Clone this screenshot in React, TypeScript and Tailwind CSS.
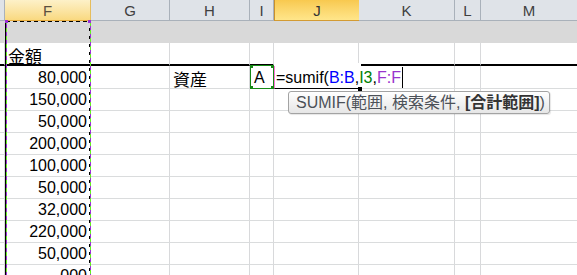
import React from "react";

const W = [5, 86, 79, 80, 24, 85, 96, 26, 97];
const H = ["", "F", "G", "H", "I", "J", "K", "L", "M"];
const nums = ["150,000", "50,000", "200,000", "100,000", "50,000", "32,000", "220,000", "50,000", "000"];

function HeaderRow() {
  return (
    <div className="flex h-[21px]">
      {W.map((w, i) => {
        let cls = "bg-[#dfe3e8] border-r border-b border-[#a9b1ba] text-[#404040]";
        if (i === 1) cls = "bg-gradient-to-b from-[#fdf1c8] to-[#f9d980] border-r border-r-[#e6bd5c] border-b border-b-[#e8ac3c] text-[#5a5040]";
        if (i === 5) cls = "bg-gradient-to-b from-[#f8c94f] to-[#ffe68a] border-l border-l-[#c9912c] border-b border-b-[#d39b33] text-[#333]";
        return (
          <div key={i} style={{ width: w }} className={`shrink-0 h-full flex items-center justify-center text-[15px] leading-none ${cls}`}>
            {H[i]}
          </div>
        );
      })}
    </div>
  );
}

function Row({ h, cells, bottom }: { h: string; cells: (React.ReactNode | null)[]; bottom: string }) {
  return (
    <div className={`flex ${h}`}>
      {W.map((w, i) => (
        <div
          key={i}
          style={{ width: w }}
          className={`shrink-0 h-full flex items-end border-r border-r-[#d8d9db] ${bottom} ${i === 0 ? "bg-white" : ""}`}
        >
          {cells[i] ?? null}
        </div>
      ))}
    </div>
  );
}

function Num({ v }: { v: string }) {
  return <div className="w-full text-right pr-[3px] pb-[2px] text-[16px] leading-[16px] text-black">{v}</div>;
}

export default function App() {
  return (
    <div className="relative w-[577px] h-[275px] overflow-hidden bg-white font-['Liberation_Sans','Noto_Sans_CJK_JP',sans-serif]">
      <HeaderRow />
      {/* row 2 gray */}
      <div className="flex h-[22px] bg-[#d9d9d9]" />
      {/* row 3 */}
      <Row
        h="h-[23px]"
        bottom="border-b-2 border-b-black"
        cells={[null, <div className="pl-[3px] text-[17px] leading-[17px] text-black font-['Noto_Sans_CJK_JP',sans-serif]">金額</div>]}
      />
      {/* row 4 */}
      <Row
        h="h-[23px]"
        bottom="border-b border-b-[#dadcdd]"
        cells={[
          null,
          <Num v="80,000" />,
          null,
          <div className="pl-[3px] pb-[1px] text-[17px] leading-[17px] text-black font-['Noto_Sans_CJK_JP',sans-serif]">資産</div>,
          <div className="pl-[4px] pb-[2px] text-[16px] leading-[16px] text-black">A</div>,
        ]}
      />
      {nums.map((n, k) => (
        <Row key={k} h="h-[22px]" bottom="border-b border-b-[#dadcdd]" cells={[null, <Num v={n} />]} />
      ))}

      {/* marquee / range border on column F */}
      <svg className="absolute left-0 top-[20px]" width="96" height="260">
        <line x1="5.5" y1="0" x2="5.5" y2="260" stroke="#000" strokeWidth="1" />
        <line x1="6.5" y1="0" x2="6.5" y2="260" stroke="#9a2fd6" strokeWidth="1" />
        <line x1="6.5" y1="0" x2="6.5" y2="260" stroke="#66ee22" strokeWidth="1" strokeDasharray="4 4" />
        <line x1="6" y1="1.5" x2="90" y2="1.5" stroke="#000" strokeWidth="1" strokeDasharray="4 3" />
        <line x1="89.5" y1="0" x2="89.5" y2="260" stroke="#000" strokeWidth="1" strokeDasharray="3 5" />
        <line x1="90.5" y1="0" x2="90.5" y2="260" stroke="#9a2fd6" strokeWidth="1" />
        <line x1="90.5" y1="2" x2="90.5" y2="260" stroke="#66ee22" strokeWidth="1" strokeDasharray="4 4" />
        <rect x="5" y="0" width="3" height="3" fill="#9a2fd6" />
        <rect x="88" y="0" width="3" height="3" fill="#9a2fd6" />
      </svg>

      {/* I3 green reference box */}
      <div className="absolute left-[250px] top-[65px] w-[24px] h-[24px] border border-[#168a16]">
        <div className="absolute -left-[1px] -top-[1px] w-[3px] h-[3px] bg-[#168a16]" />
        <div className="absolute -right-[1px] -top-[1px] w-[3px] h-[3px] bg-[#168a16]" />
        <div className="absolute -left-[1px] -bottom-[1px] w-[3px] h-[3px] bg-[#168a16]" />
        <div className="absolute -right-[1px] -bottom-[1px] w-[3px] h-[3px] bg-[#168a16]" />
      </div>

      {/* in-cell editor J4 */}
      <div className="absolute left-[274px] top-[63px] w-[87px] h-[26px] bg-white pt-[3px] flex flex-col">
        <div className="relative w-[85px] h-[23px] border-l border-l-[#ff70d8] border-b border-b-black flex items-end pl-[1px] pb-[2px] whitespace-nowrap text-[16px] leading-[16px]">
          <span className="shrink-0 text-black">=sumif(</span>
          <span className="shrink-0 text-[#0000ff]">B:B</span>
          <span className="shrink-0 text-black">,</span>
          <span className="shrink-0 text-[#008000]">I3</span>
          <span className="shrink-0 text-black">,</span>
          <span className="shrink-0 text-[#9933cc]">F:F</span>
          <span className="shrink-0 ml-[1px] mb-[-2px] w-[1px] h-[21px] bg-black" />
          <span className="absolute right-[-3px] bottom-[-3px] w-[4px] h-[4px] bg-black" />
        </div>
      </div>

      {/* tooltip */}
      <div className="absolute left-[288px] top-[91px] w-[262px] h-[23px] border border-[#a3a3a3] rounded-[3px] bg-gradient-to-b from-white to-[#e6e6e6] pl-[7px] flex items-center shadow-[1px_1px_1px_rgba(0,0,0,0.1)]">
        <span className="whitespace-pre text-[16px] leading-none text-[#4c5158]">
          {"SUMIF(範囲, 検索条件, "}
          <b className="font-bold text-[#333]">[合計範囲]</b>
          {")"}
        </span>
      </div>
    </div>
  );
}
